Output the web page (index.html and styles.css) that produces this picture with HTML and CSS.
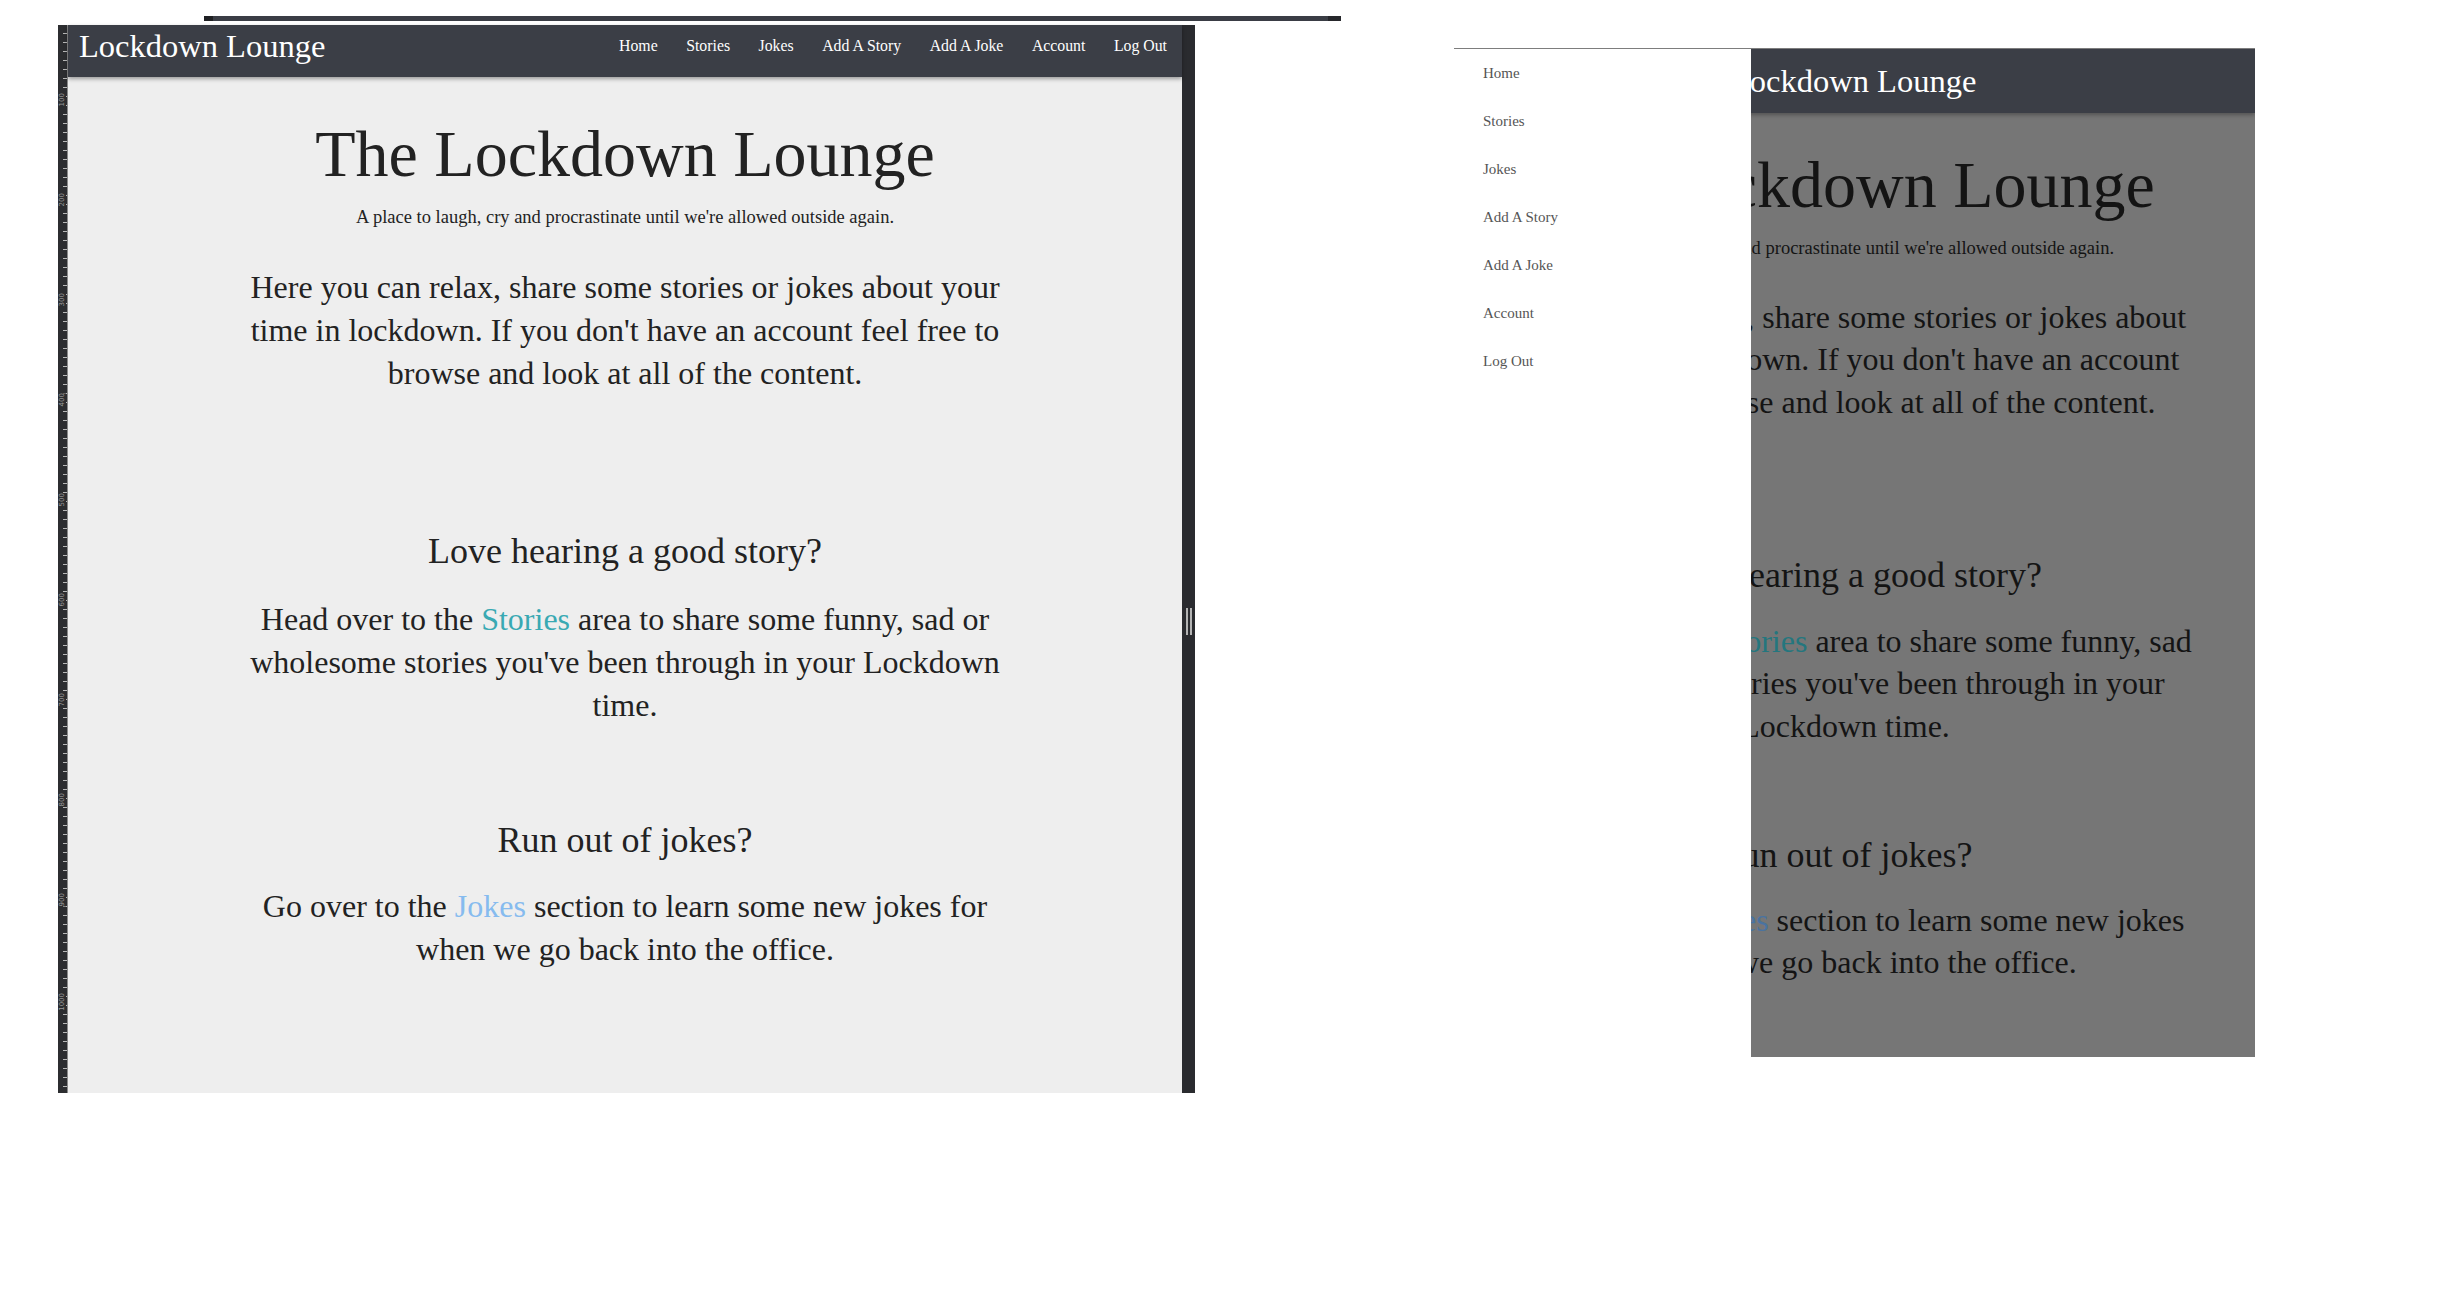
FILE: index.html
```html
<!DOCTYPE html>
<html lang="en">
<head>
<meta charset="utf-8">
<title>Lockdown Lounge</title>
<link rel="stylesheet" href="styles.css">
</head>
<body>
<div class="strip"></div>

<div class="win">
  <div class="ruler">
    <div class="rl"><span>100</span></div>
    <div class="rl"><span>200</span></div>
    <div class="rl"><span>300</span></div>
    <div class="rl"><span>400</span></div>
    <div class="rl"><span>500</span></div>
    <div class="rl"><span>600</span></div>
    <div class="rl"><span>700</span></div>
    <div class="rl"><span>800</span></div>
    <div class="rl"><span>900</span></div>
    <div class="rl"><span>1000</span></div>
  </div>
  <div class="viewport">
    <header class="bar">
      <div class="brand">Lockdown Lounge</div>
      <nav class="nav">
        <a href="#">Home</a>
        <a href="#">Stories</a>
        <a href="#">Jokes</a>
        <a href="#">Add A Story</a>
        <a href="#">Add A Joke</a>
        <a href="#">Account</a>
        <a href="#">Log Out</a>
      </nav>
    </header>
    <main class="content">
      <h1 class="title">The Lockdown Lounge</h1>
      <p class="tagline">A place to laugh, cry and procrastinate until we're allowed outside again.</p>
      <p class="lead lead-intro">Here you can relax, share some stories or jokes about your<br>time in lockdown. If you don't have an account feel free to<br>browse and look at all of the content.</p>
      <h2 class="sec sec-story">Love hearing a good story?</h2>
      <p class="lead lead-story">Head over to the <a class="lk-stories" href="#">Stories</a> area to share some funny, sad or<br>wholesome stories you've been through in your Lockdown<br>time.</p>
      <h2 class="sec sec-jokes">Run out of jokes?</h2>
      <p class="lead lead-jokes">Go over to the <a class="lk-jokes" href="#">Jokes</a> section to learn some new jokes for<br>when we go back into the office.</p>
    </main>
  </div>
  <div class="scroll"><span class="grip"></span><span class="grip"></span></div>
</div>

<div class="mwin">
  <div class="mpage">
    <header class="mbar">
      <div class="brand">Lockdown Lounge</div>
    </header>
    <main class="mcontent">
      <h1 class="title">The Lockdown Lounge</h1>
      <p class="tagline m-tagline">A place to laugh, cry and procrastinate until we're allowed outside again.</p>
      <p class="mlead m-intro">Here you can relax, share some stories or jokes about<br>your time in lockdown. If you don't have an account<br>feel free to browse and look at all of the content.</p>
      <h2 class="sec m-sec-story">Love hearing a good story?</h2>
      <p class="mlead m-story">Head over to the <a class="mlk-stories" href="#">Stories</a> area to share some funny, sad<br>or wholesome stories you've been through in your<br>Lockdown time.</p>
      <h2 class="sec m-sec-jokes">Run out of jokes?</h2>
      <p class="mlead m-jokes">Go over to the <a class="mlk-jokes" href="#">Jokes</a> section to learn some new jokes<br>for when we go back into the office.</p>
    </main>
  </div>
  <nav class="drawer">
    <a href="#">Home</a>
    <a href="#">Stories</a>
    <a href="#">Jokes</a>
    <a href="#">Add A Story</a>
    <a href="#">Add A Joke</a>
    <a href="#">Account</a>
    <a href="#">Log Out</a>
  </nav>
</div>
</body>
</html>
```

FILE: styles.css
```css
* { box-sizing: border-box; }

html, body { margin: 0; padding: 0; }

body {
  position: relative;
  width: 2450px;
  height: 1302px;
  overflow: hidden;
  background: #ffffff;
  font-family: "Liberation Serif", "Times New Roman", serif;
}

/* thin window strip above the first screenshot */
.strip {
  position: absolute;
  left: 204px;
  top: 16px;
  width: 1137px;
  height: 5px;
  background: linear-gradient(to right, #1f2023 0 9px, #3a3d45 9px calc(100% - 13px), #26272b calc(100% - 13px));
}

/* ---------- desktop screenshot ---------- */
.win {
  position: absolute;
  left: 58px;
  top: 25px;
  width: 1137px;
  height: 1068px;
  display: flex;
}

.ruler {
  width: 10px;
  flex-shrink: 0;
  padding-top: 68px;
  display: flex;
  flex-direction: column;
  background-color: #2c2d30;
  background-image:
    linear-gradient(to right, transparent 9px, #8a8a8a 9px),
    repeating-linear-gradient(to bottom, transparent 0 8px, #b9b9b9 8px 9px);
  background-size: 100% 100%, 4px 100%;
  background-position: 0 0, 5px 0;
  background-repeat: no-repeat;
}

.rl {
  height: 100px;
  display: flex;
  align-items: flex-start;
  justify-content: flex-start;
}

.rl span {
  writing-mode: vertical-rl;
  transform: rotate(180deg);
  font-family: "DejaVu Sans", sans-serif;
  font-size: 7px;
  line-height: 8px;
  color: #9a9a9a;
  background: #2c2d30;
}

.viewport {
  flex: 1;
  min-width: 0;
  display: flex;
  flex-direction: column;
  background: #eeeeee;
}

.bar {
  height: 52px;
  flex-shrink: 0;
  display: flex;
  justify-content: space-between;
  align-items: flex-start;
  padding: 3px 15px 0 11px;
  background: #3b3e46;
  color: #ffffff;
  box-shadow: 0 2px 4px rgba(0, 0, 0, 0.35);
  position: relative;
  z-index: 1;
}

.brand {
  font-size: 32.5px;
  line-height: 36px;
  white-space: nowrap;
  color: #ffffff;
}

.nav {
  display: flex;
  gap: 28.5px;
  margin-top: 8px;
  font-size: 15.8px;
  line-height: 20px;
  white-space: nowrap;
}

.nav a {
  color: #ffffff;
  text-decoration: none;
}

.content {
  padding-top: 37px;
  text-align: center;
  color: #222222;
}

.title {
  margin: 0;
  font-size: 66px;
  line-height: 80px;
  font-weight: normal;
  white-space: nowrap;
}

.tagline {
  margin: 11px 0 0;
  font-size: 18.5px;
  line-height: 24px;
  white-space: nowrap;
}

.lead {
  margin: 0;
  font-size: 32px;
  line-height: 43px;
  white-space: nowrap;
}

.lead-intro { margin-top: 37px; }
.lead-story { margin-top: 25px; }
.lead-jokes { margin-top: 23px; }

.sec {
  margin: 0;
  font-size: 36px;
  line-height: 44px;
  font-weight: normal;
  white-space: nowrap;
}

.sec-story { margin-top: 133.5px; }
.sec-jokes { margin-top: 91px; }

.lk-stories { color: #39a9b3; text-decoration: none; }
.lk-jokes { color: #86bbef; text-decoration: none; }

.scroll {
  width: 13px;
  flex-shrink: 0;
  background: #2a2b2f;
  padding-top: 583px;
  display: flex;
  justify-content: center;
  align-items: flex-start;
  gap: 2px;
}

.grip {
  width: 2px;
  height: 27px;
  background: #b3b3b3;
}

/* ---------- mobile screenshot ---------- */
.mwin {
  position: absolute;
  left: 1454px;
  top: 48px;
  width: 801px;
  height: 1009px;
  border-top: 1px solid #7d7d7d;
  overflow: hidden;
}

.mpage {
  height: 100%;
  display: flex;
  flex-direction: column;
  background: #767676;
}

.mbar {
  height: 64px;
  flex-shrink: 0;
  padding: 14px 0 0 276px;
  background: #3b3e46;
  box-shadow: 0 2px 4px rgba(0, 0, 0, 0.3);
  position: relative;
  z-index: 1;
}

.mcontent {
  padding: 31.7px 19px 0 0;
  text-align: center;
  color: #141414;
}

.m-tagline { margin-top: 11px; }

.mlead {
  margin: 0;
  font-size: 32px;
  line-height: 42.5px;
  white-space: nowrap;
}

.m-intro { margin-top: 36px; }
.m-sec-story { margin-top: 129.5px; }
.m-story { margin-top: 23px; }
.m-sec-jokes { margin-top: 85.5px; }
.m-jokes { margin-top: 22px; }

.mlk-stories { color: #24767e; text-decoration: none; }
.mlk-jokes { color: #4a73a0; text-decoration: none; }

/* slide-out menu drawn over the dimmed page */
.drawer {
  position: absolute;
  left: 0;
  top: 0;
  bottom: 0;
  width: 297px;
  padding-left: 29px;
  background: #ffffff;
  z-index: 2;
  display: flex;
  flex-direction: column;
}

.drawer a {
  font-size: 15px;
  line-height: 48px;
  color: #555555;
  text-decoration: none;
  white-space: nowrap;
}
```
